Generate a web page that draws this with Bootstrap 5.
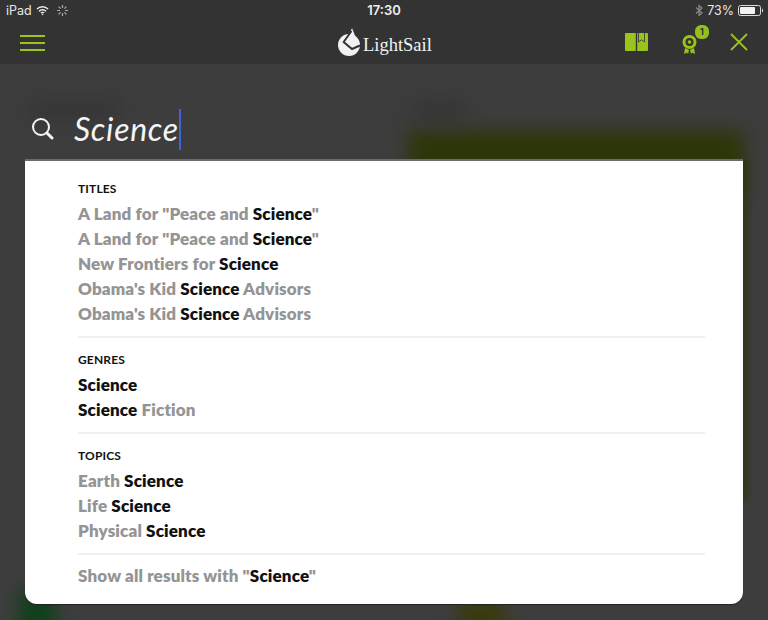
<!DOCTYPE html>
<html lang="en"><head><meta charset="utf-8"><title>LightSail search</title>
<link href="https://cdn.jsdelivr.net/npm/bootstrap@5.3.0/dist/css/bootstrap.min.css" rel="stylesheet">
<style>
html,body{height:620px;overflow:hidden}
body{background:#3d3d3d;font-family:Lato,"Liberation Sans",sans-serif;position:relative}
.top-shell{background:#333;height:64px;position:relative;z-index:2}
.status-row{height:21px;padding:0 4px 0 6px;font:12.500px/21px Inter,"Liberation Sans",sans-serif;color:#e8e8e8}
.status-time{font-weight:600;font-size:13px;color:#eee;position:absolute;left:0;right:0;text-align:center;top:0}
.tool-row{height:43px;padding:0 20px;position:relative}
.logo-wrap{position:absolute;left:338px;top:7px;color:#f2f2f2;font:18.500px/26px "Liberation Serif",serif;letter-spacing:0}
.logo-name{margin-left:2px;margin-top:4px}
.award-slot{position:relative;margin-left:34px;width:24px}
.count-pill{position:absolute;left:13px;top:-5px;width:14px;height:14px;border-radius:6px;background:#93c01f;color:#333;font:700 9px/14px Inter,sans-serif;text-align:center}
.close-slot{margin-left:24px}
.search-row{position:relative;z-index:2;height:96px;padding:35px 0 0 31px;color:#fff}
.query-text{font:italic 400 32px/39px Lato,sans-serif;letter-spacing:.7px;color:#f5f5f5;margin-left:20px;border-right:2px solid #3f63d8;height:41px}
.search-glyph{margin-bottom:2px}
.results-sheet{position:absolute;z-index:2;left:25px;top:161px;width:718px;height:443px;background:#fff;border-radius:0 0 12px 12px;padding:0 38px 0 53px;box-shadow:0 -2px 0 #6b6b6b,0 1px 1px #222}
.group-block+.group-block{border-top:2px solid #f0f0f0}
.group-one{padding:19px 0 10px}
.group-two{padding:13px 0 10px}
.group-three{padding:13px 0 10px}
.group-last{padding:8px 0 0}
.group-head{font:700 12px/17px Lato,sans-serif;color:#111;margin-bottom:4px;letter-spacing:.15px}
.hit{font:800 17px/25px Lato,sans-serif;color:#949494;white-space:nowrap;letter-spacing:.15px}
.hit b{color:#111;font-weight:800}
.blur-blob{position:absolute;z-index:1;filter:blur(9px)}
.blob-olive{left:408px;top:131px;width:336px;height:60px;background:#2d3608;border-radius:6px}
.blob-green{left:19px;top:590px;width:36px;height:50px;background:#10401a}
.blob-yellow{left:458px;top:596px;width:46px;height:40px;background:#3a3a10}
.blob-dark-a{left:30px;top:100px;width:90px;height:20px;background:#363636}
.blob-dark-b{left:412px;top:102px;width:55px;height:16px;background:#343434}
.blob-right{left:742px;top:160px;width:6px;height:340px;background:#2f3512;filter:blur(3px)}
</style></head>
<body>
<div class="blur-blob blob-olive"></div><div class="blur-blob blob-green"></div><div class="blur-blob blob-yellow"></div><div class="blur-blob blob-dark-a"></div><div class="blur-blob blob-dark-b"></div><div class="blur-blob blob-right"></div>
<header class="top-shell">
  <div class="status-row d-flex align-items-center position-relative">
    <span>iPad</span>
    <svg class="ms-1" width="13" height="11" viewBox="0 0 14 11" fill="none" stroke="#eee" stroke-width="1.500"><path d="M1 4a8.500 8.500 0 0 1 12 0M3.200 6.200a5.400 5.400 0 0 1 7.600 0M5.300 8.200a2.400 2.400 0 0 1 3.400 0"/><circle cx="7" cy="9.800" r=".8" fill="#eee" stroke="none"/></svg>
    <svg class="ms-2" width="11" height="11" viewBox="0 0 11 11" stroke="#aaa" stroke-width="1.200"><path d="M5.500 0v3M5.500 8v3M0 5.500h3M8 5.500h3M1.600 1.600l2 2M7.400 7.400l2 2M1.600 9.400l2-2M7.400 3.600l2-2"/></svg>
    <span class="status-time">17:30</span>
    <div class="ms-auto d-flex align-items-center">
      <svg width="8" height="13" viewBox="0 0 8 12" fill="none" stroke="#8a8a8a" stroke-width="1.200"><path d="M1 3l6 5.500L4 11V1l3 2.500L1 9"/></svg>
      <span class="ms-1">73%</span>
      <svg class="ms-1" width="26" height="11" viewBox="0 0 26 11"><rect x=".5" y=".5" width="22" height="10" rx="2" fill="none" stroke="#ddd"/><rect x="2" y="2" width="15" height="7" rx="1" fill="#f2f2f2"/><path d="M24 3.500c1.500.5 1.500 3.500 0 4z" fill="#ddd"/></svg>
    </div>
  </div>
  <div class="tool-row d-flex align-items-center">
    <svg width="25" height="16" viewBox="0 0 25 16" fill="#9ac31c"><rect width="25" height="2" y="0"/><rect width="25" height="2" y="7"/><rect width="25" height="2" y="14"/></svg>
    <div class="logo-wrap d-flex align-items-start">
      <svg width="23" height="28" viewBox="0 0 23 28"><circle cx="11" cy="17" r="11" fill="#f2f2f2"/><path fill="#f2f2f2" d="M14 0l7 18-7 3-6-5z"/><path d="M13.500 3L6 13.500M5 13.500l9 7.500 8-3.500" fill="none" stroke="#333" stroke-width="2"/></svg>
      <span class="logo-name">LightSail</span>
    </div>
    <div class="ms-auto d-flex align-items-center">
      <svg width="23" height="18" viewBox="0 0 23 18"><path fill="#9ac31c" d="M1 0h9.800v18H1a1 1 0 0 1-1-1V1a1 1 0 0 1 1-1zM12.200 0H22a1 1 0 0 1 1 1v16a1 1 0 0 1-1 1h-9.800z"/><path d="M13.500 0v9l3-2.200 3 2.200V0" fill="none" stroke="#333" stroke-width=".8"/></svg>
      <div class="award-slot">
        <svg width="15" height="21" viewBox="0 0 15 21" fill="none"><circle cx="7.500" cy="8" r="5.500" stroke="#9ac31c" stroke-width="3"/><circle cx="7.500" cy="8" r="1.800" fill="#9ac31c"/><path d="M3 14l-1 6 3-1.500 1 1.500 1-4zM12 14l1 6-3-1.500-1 1.500-1-4z" fill="#9ac31c"/></svg>
        <span class="count-pill">1</span>
      </div>
      <svg class="close-slot" width="18" height="18" viewBox="0 0 18 18" stroke="#9ac31c" stroke-width="1.800"><path d="M1 1l16 16M17 1L1 17"/></svg>
    </div>
  </div>
</header>
<div class="search-row d-flex align-items-center">
  <svg class="search-glyph" width="23" height="23" viewBox="0 0 23 23" fill="none" stroke="#f5f5f5"><circle cx="10" cy="10" r="8" stroke-width="2"/><path d="M16 16l5 5" stroke-width="3" stroke-linecap="round"/></svg>
  <span class="query-text">Science</span>
</div>
<main class="results-sheet">
  <section class="group-block group-one">
    <div class="group-head">TITLES</div>
    <div class="hit">A Land for "Peace and <b>Science</b>"</div>
    <div class="hit">A Land for "Peace and <b>Science</b>"</div>
    <div class="hit">New Frontiers for <b>Science</b></div>
    <div class="hit">Obama's Kid <b>Science</b> Advisors</div>
    <div class="hit">Obama's Kid <b>Science</b> Advisors</div>
  </section>
  <section class="group-block group-two">
    <div class="group-head">GENRES</div>
    <div class="hit"><b>Science</b></div>
    <div class="hit"><b>Science</b> Fiction</div>
  </section>
  <section class="group-block group-three">
    <div class="group-head">TOPICS</div>
    <div class="hit">Earth <b>Science</b></div>
    <div class="hit">Life <b>Science</b></div>
    <div class="hit">Physical <b>Science</b></div>
  </section>
  <section class="group-block group-last">
    <div class="hit">Show all results with "<b>Science</b>"</div>
  </section>
</main>
<script src="https://cdn.jsdelivr.net/npm/bootstrap@5.3.0/dist/js/bootstrap.bundle.min.js"></script>
</body></html>
